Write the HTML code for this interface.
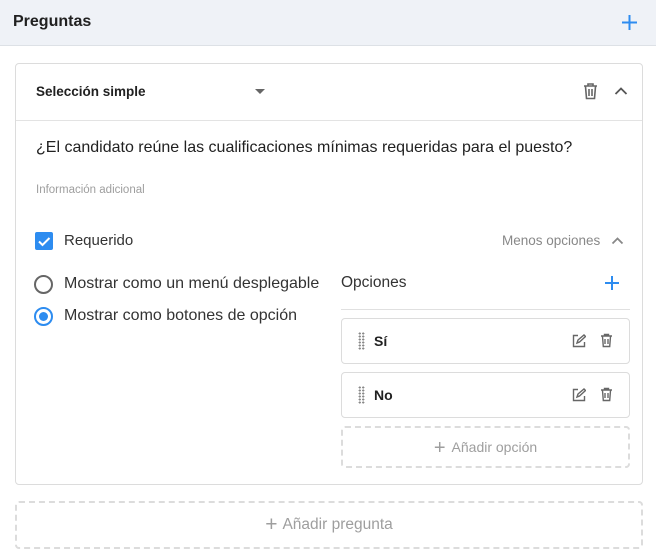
<!DOCTYPE html>
<html><head><meta charset="utf-8"><style>
*{box-sizing:border-box;margin:0;padding:0}
body{width:656px;height:560px;background:#fff;font-family:"Liberation Sans",sans-serif;color:#212121;position:relative;overflow:hidden}
.a{position:absolute}
.hdr{left:0;top:0;width:656px;height:46px;background:#eff2f7;border-bottom:1px solid #dde1e6}
.card{left:15px;top:63px;width:628px;height:422px;border:1px solid #dcdcdc;border-radius:4px}
.dash{border:2px dashed #dcdcdc;border-radius:4px;color:#9e9e9e;text-align:center}
.opt{left:341px;width:289px;border:1px solid #dcdcdc;border-radius:4px;height:46px}
.grip{width:7px;height:18px;background-image:radial-gradient(circle,#888 1px,transparent 1.2px);background-size:3.5px 3px}
.radio{width:19px;height:19px;border:2px solid #666;border-radius:50%}
</style></head><body>
<div class="a hdr"></div>
<div class="a" style="left:13px;top:13px;font-size:16px;font-weight:bold">Preguntas</div>
<svg class="a" style="left:621px;top:14px" width="17" height="17"><path d="M8.5 1v15M1 8.5h15" stroke="#2d8cf0" stroke-width="2"/></svg>
<div class="a card"></div>
<div class="a" style="left:16px;top:120px;width:626px;height:1px;background:#e3e3e3"></div>
<div class="a" style="left:36px;top:84px;font-size:13.5px;font-weight:bold">Selección simple</div>
<div class="a" style="left:255px;top:89px;border:5px solid transparent;border-top:5px solid #666;border-bottom:0"></div>
<svg class="a" style="left:583px;top:83px" width="15" height="17"><path d="M1 3h13M5 3V1h5v2M2.5 3.5l1 12h8l1-12M6 6v7M9 6v7" fill="none" stroke="#666" stroke-width="1.6"/></svg>
<svg class="a" style="left:614px;top:86px" width="14" height="10"><path d="M1.5 8l5.5-5.5 5.5 5.5" fill="none" stroke="#555" stroke-width="1.8"/></svg>
<div class="a" style="left:36px;top:139px;font-size:16px">¿El candidato reúne las cualificaciones mínimas requeridas para el puesto?</div>
<div class="a" style="left:36px;top:184px;font-size:11.5px;color:#9e9e9e">Información adicional</div>
<div class="a" style="left:35px;top:232px;width:18px;height:18px;background:#2d8cf0;border-radius:2px"></div>
<svg class="a" style="left:35px;top:232px" width="18" height="18"><path d="M4 9.5l3.5 3.5L14.5 6" fill="none" stroke="#fff" stroke-width="2"/></svg>
<div class="a" style="left:64px;top:232px;font-size:15px;color:#333">Requerido</div>
<div class="a" style="left:502px;top:233px;font-size:13.5px;color:#888">Menos opciones</div>
<svg class="a" style="left:611px;top:236px" width="13" height="9"><path d="M1.5 7.5l5-5 5 5" fill="none" stroke="#888" stroke-width="1.8"/></svg>
<div class="a radio" style="left:34px;top:275px"></div>
<div class="a" style="left:64px;top:275px;font-size:16px;color:#333">Mostrar como un menú desplegable</div>
<div class="a radio" style="left:34px;top:307px;border-color:#2d8cf0"></div>
<div class="a" style="left:39px;top:312px;width:9px;height:9px;border-radius:50%;background:#2d8cf0"></div>
<div class="a" style="left:64px;top:307px;font-size:16px;color:#333">Mostrar como botones de opción</div>
<div class="a" style="left:341px;top:274px;font-size:15.5px;color:#333">Opciones</div>
<svg class="a" style="left:604px;top:275px" width="16" height="16"><path d="M8 1v14M1 8h14" stroke="#2d8cf0" stroke-width="2"/></svg>
<div class="a" style="left:341px;top:309px;width:289px;height:1px;background:#e0e0e0"></div>
<div class="a opt" style="top:318px"></div>
<div class="a grip" style="left:358px;top:332px"></div>
<div class="a" style="left:374px;top:333px;font-size:14px;font-weight:bold">Sí</div>
<div class="a opt" style="top:372px"></div>
<div class="a grip" style="left:358px;top:386px"></div>
<div class="a" style="left:374px;top:387px;font-size:14px;font-weight:bold">No</div>
<svg class="a" style="left:572px;top:334px" width="14" height="14"><path d="M6 1.5H1.5v11h11V8M5 9l1-3 6-5 1.5 1.5-6 5.5z" fill="none" stroke="#666" stroke-width="1.4"/></svg>
<svg class="a" style="left:600px;top:333px" width="13" height="15"><path d="M1 3h11M4.5 3V1.5h4V3M2.5 3.5l.8 10h6.4l.8-10M5 6v5M8 6v5" fill="none" stroke="#666" stroke-width="1.4"/></svg>
<svg class="a" style="left:572px;top:388px" width="14" height="14"><path d="M6 1.5H1.5v11h11V8M5 9l1-3 6-5 1.5 1.5-6 5.5z" fill="none" stroke="#666" stroke-width="1.4"/></svg>
<svg class="a" style="left:600px;top:387px" width="13" height="15"><path d="M1 3h11M4.5 3V1.5h4V3M2.5 3.5l.8 10h6.4l.8-10M5 6v5M8 6v5" fill="none" stroke="#666" stroke-width="1.4"/></svg>
<div class="a dash" style="left:341px;top:426px;width:289px;height:42px;line-height:38px;font-size:14px">
<span style="font-size:20px;vertical-align:-2px;margin-right:6px">+</span>Añadir opción</div>
<div class="a dash" style="left:15px;top:501px;width:628px;height:48px;line-height:44px;font-size:15.5px">
<span style="font-size:21px;vertical-align:-2px;margin-right:5px">+</span>Añadir pregunta</div>
</body></html>
